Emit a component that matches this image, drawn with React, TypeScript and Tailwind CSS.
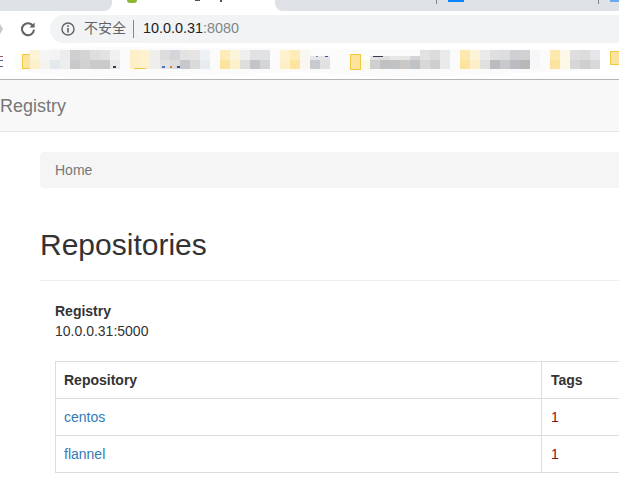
import React from 'react';

type Block = [number, number, number, number, string];

const font = "font-['Liberation_Sans','Noto_Sans_CJK_SC',sans-serif]";

// blurred bookmark labels: x, upper colour, lower colour
const mosaicTop: [number, string, string][] = [
    [30, '#fdf3d6', '#fdf1cc'], [40, '#f5f5f5', '#f5f3ee'], [50, '#f3f3f3', '#e4e9ee'], [60, '#ececec', '#eeeeee'],
    [70, '#cfcfd2', '#c9c9cc'], [80, '#d4d4d4', '#d2d2d2'], [90, '#dedede', '#cccbcb'], [100, '#e2e2e4', '#cbc9ca'],
    [110, '#f0f1f3', '#e8eaec'], [130, '#fdf0c8', '#fdf0c8'], [140, '#fdf2d0', '#fdf1ce'], [150, '#efeeec', '#efeeec'],
    [160, '#dcdcdc', '#e2e2e2'], [170, '#d4d5da', '#dcdcdc'], [180, '#e4e3e3', '#c8c8cc'], [190, '#e6e5e3', '#dadada'],
    [200, '#eef1f5', '#e8ecf0'], [220, '#fdebb8', '#fde49e'], [230, '#fbf3da', '#fcf1cb'], [240, '#efefef', '#dfdedb'],
    [250, '#e2e1e3', '#c4c4c6'], [260, '#e0e2e4', '#d4d5d8'], [280, '#fdf1d0', '#fdf0c8'], [290, '#fdebb8', '#fde59f'],
    [300, '#faf7f2', '#faf7f2'], [420, '#e2e2e2', '#d8d8d8'], [430, '#dcdcdc', '#d0cfce'], [440, '#e8eaec', '#e8eaec'],
    [460, '#fde9ae', '#fde49e'], [470, '#fdf3d6', '#fcefc9'], [480, '#ebeaea', '#e2e0dc'], [490, '#dfdfe0', '#bcbcbe'],
    [500, '#dcdde0', '#c8c9cc'], [510, '#cfd0d4', '#bcbdc2'], [520, '#d2d0d2', '#b8b8b8'], [530, '#f6f7f9', '#f6f7f9'],
    [550, '#fde9ae', '#fde49e'], [560, '#fdf8e8', '#fdf8e8'], [570, '#dedede', '#d6d6d6'], [580, '#dcdcdc', '#cfcfcf'],
    [590, '#e4e6ea', '#d8d8da'],
];

const mosaicLow: [number, string, string][] = [
    [310, '#e4e6ea', '#c8cad0'], [320, '#e6e4e4', '#e2e0e0'], [360, '#ffffff', '#fdf8e4'], [370, '#e2e2e2', '#d0cfcf'],
    [380, '#e0e0e0', '#c0c1c3'], [390, '#e8e8e8', '#c2c3c5'], [400, '#e6e6e6', '#cbc9c7'], [410, '#d4d4d6', '#bfc3c6'],
];

const extras: Block[] = [
    [350, 54, 10, 16, '#fde49e'],
    [134, 68, 12, 1, '#f0c940'],
    [373, 56, 10, 1, '#3c3a50'],
    [113, 66, 3, 2, '#3c3a50'],
    [162, 66, 3, 2, '#4a78c8'],
    [170, 66, 2, 2, '#d08040'],
    [177, 66, 3, 2, '#3050a0'],
    [316, 56, 2, 1, '#6a8ac8'],
    [325, 56, 3, 1, '#3050a0'],
];

const BookmarkMosaic = () => (
    <svg width="619" height="35" viewBox="0 44 619 35" className="block">
        <path d="M14 58 Q30 46 120 47 L360 49 L560 49 L600 70 L400 78 L300 72 L120 78 Q30 78 14 66Z" fill="#fbfbfb" />
        <rect x="0" y="56" width="3" height="1" fill="#9a5a70" />
        <rect x="0" y="60" width="3" height="1" fill="#5a5a90" />
        <rect x="0" y="66" width="3" height="1" fill="#5a5a90" />
        <rect x="22.5" y="54.5" width="8" height="14" fill="#fde49e" stroke="#f0c940" />
        {mosaicTop.map(([x, a, b]) => (
            <g key={x}>
                <rect x={x} y="50" width="10" height="10" fill={a} />
                <rect x={x} y="60" width="10" height="9" fill={b} />
            </g>
        ))}
        {mosaicLow.map(([x, a, b]) => (
            <g key={x}>
                <rect x={x} y="56" width="10" height="4" fill={a} />
                <rect x={x} y="60" width="10" height="9" fill={b} />
            </g>
        ))}
        {extras.map(([x, y, w, h, c]) => (
            <rect key={x} x={x} y={y} width={w} height={h} fill={c} />
        ))}
        <rect x="350.5" y="54.5" width="10" height="15" fill="none" stroke="#f0c940" />
        <rect x="610.5" y="51.5" width="12" height="13" fill="#fde49e" stroke="#f0c940" />
    </svg>
);

const ReloadIcon = () => (
    <svg width="16" height="16" viewBox="0 0 16 16" fill="none">
        <path d="M13.2 5.2 A6 6 0 1 0 14 8.6" stroke="#5f6368" strokeWidth="2" />
        <path d="M14.6 1.4 V6.6 H9.4Z" fill="#5f6368" />
    </svg>
);

const InfoIcon = () => (
    <svg width="14" height="14" viewBox="0 0 14 14" fill="none">
        <circle cx="7" cy="7" r="6" stroke="#5f6368" strokeWidth="1.4" />
        <rect x="6.2" y="3.2" width="1.6" height="1.7" fill="#5f6368" />
        <rect x="6.2" y="6" width="1.6" height="4.6" fill="#5f6368" />
    </svg>
);

const BrowserChrome = () => (
    <div className={`flex flex-col ${font}`}>
        <div className="flex h-[11px] bg-white">
            <div className="w-[112px] rounded-br-lg bg-[#dee1e6]" />
            <div className="flex w-[163px] items-start gap-[58px] pl-[15px]">
                <div className="h-[3px] w-[10px] rounded-b-full bg-[#8ab832]" />
                <div className="flex gap-[20px]">
                    <div className="h-[1px] w-[5px] bg-[#555]" />
                    <div className="h-[2px] w-[2px] bg-[#555]" />
                </div>
            </div>
            <div className="flex flex-1 items-start rounded-bl-lg bg-[#dee1e6]">
                <div className="ml-[1px] flex w-full items-start">
                    <div className="ml-[160px] h-[4px] w-[1px] bg-[#80868b]" />
                    <div className="ml-[11px] h-[2px] w-[16px] bg-[#0a84ff]" />
                    <div className="ml-[134px] h-[4px] w-[1px] bg-[#80868b]" />
                    <div className="ml-[11px] h-[2px] w-[9px] bg-[#6aa8f0]" />
                </div>
            </div>
        </div>
        <div className="flex h-[33px] items-center bg-white pt-[2px]">
            <div className="h-0 w-0 border-y-[5px] border-l-[3px] border-y-transparent border-l-[#c4c6c9]" />
            <div className="ml-[17px] flex">
                <ReloadIcon />
            </div>
            <div className="ml-[14px] flex h-[28px] flex-1 items-center rounded-l-full bg-[#f1f3f4] pl-[11px]">
                <InfoIcon />
                <span className="ml-[9px] text-[14px] text-[#5f6368]">不安全</span>
                <span className="ml-[7px] h-[18px] w-[1px] bg-[#80868b]" />
                <span className="ml-[9px] text-[14.4px] text-[#202124]">10.0.0.31</span>
                <span className="text-[14.4px] text-[#80868b]">:8080</span>
            </div>
        </div>
        <div className="h-[35px] bg-white">
            <BookmarkMosaic />
        </div>
        <div className="h-[1px] bg-[#b4b4b4]" />
    </div>
);

const rows = [
    { name: 'centos', tags: 1 },
    { name: 'flannel', tags: 1 },
];

const App: React.FC = () => {
    return (
        <div className={`h-[504px] w-[619px] overflow-hidden bg-white text-[14px] text-[#333] ${font}`}>
            <BrowserChrome />
            <nav className="flex h-[52px] w-[619px] items-center border-b border-[#e7e7e7] bg-[#f8f8f8] pt-[1px]">
                <span className="text-[18px] text-[#777]">Registry</span>
            </nav>
            <div className="w-[760px] pl-[40px] pt-[20px]">
                <div className="flex h-[36px] items-center rounded bg-[#f5f5f5] px-[15px] text-[#777]">Home</div>
                <div className="mt-[40px] border-b border-[#eee] pb-[19px]">
                    <h1 className="text-[30px] leading-[33px] font-normal text-[#333]">Repositories</h1>
                </div>
                <div className="pl-[15px] pt-[20px]">
                    <div className="text-[14px] leading-[20px] font-bold">Registry</div>
                    <div className="leading-[20px]">10.0.0.31:5000</div>
                    <table className="mt-[20px] w-[640px] table-fixed border-collapse">
                        <colgroup>
                            <col className="w-[486px]" />
                            <col />
                        </colgroup>
                        <thead>
                            <tr className="h-[37px]">
                                <th className="border border-[#ddd] px-[8px] text-left font-bold">Repository</th>
                                <th className="border border-[#ddd] pl-[9px] pr-[8px] text-left font-bold">Tags</th>
                            </tr>
                        </thead>
                        <tbody>
                            {rows.map(row => (
                                <tr key={row.name} className="h-[37px]">
                                    <td className="border border-[#ddd] px-[8px]">
                                        <a href="#" className="text-[#337ab7]">{row.name}</a>
                                    </td>
                                    <td className="border border-[#ddd] pl-[9px] pr-[8px] text-[#8f1010]">{row.tags}</td>
                                </tr>
                            ))}
                        </tbody>
                    </table>
                </div>
            </div>
        </div>
    );
};

export default App;
